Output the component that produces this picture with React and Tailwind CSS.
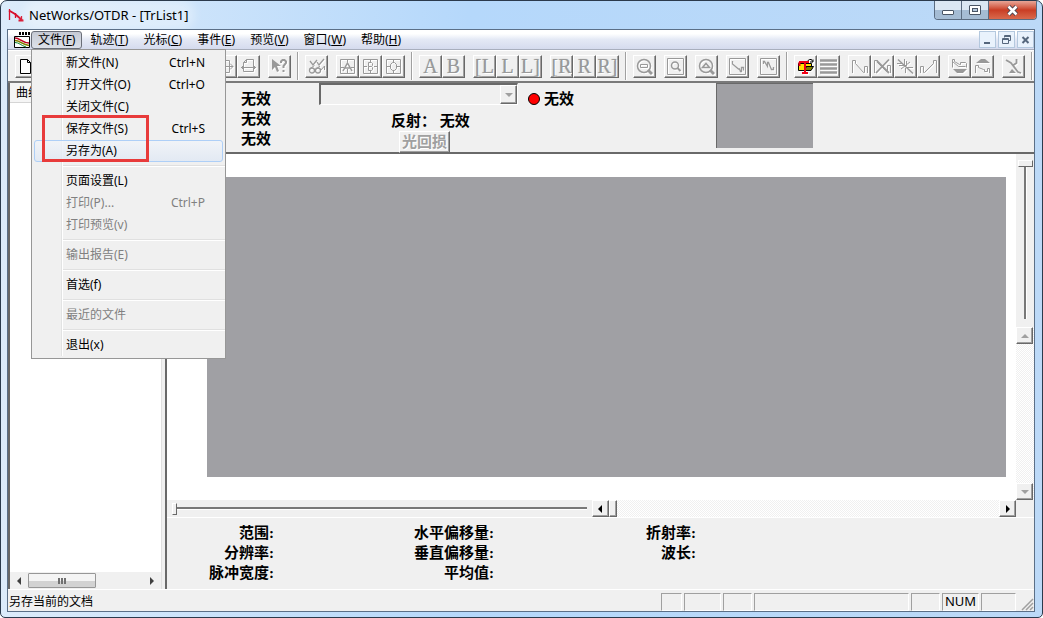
import { useState } from "react";
import clsx from "clsx";

const MENUS = [
  ["文件", "F"],
  ["轨迹", "T"],
  ["光标", "C"],
  ["事件", "E"],
  ["预览", "V"],
  ["窗口", "W"],
  ["帮助", "H"],
];

const FILE_MENU = [
  { label: "新文件(N)", keys: "Ctrl+N" },
  { label: "打开文件(O)", keys: "Ctrl+O" },
  { label: "关闭文件(C)" },
  { label: "保存文件(S)", keys: "Ctrl+S" },
  { label: "另存为(A)", active: true },
  null,
  { label: "页面设置(L)" },
  { label: "打印(P)...", keys: "Ctrl+P", disabled: true },
  { label: "打印预览(v)", disabled: true },
  null,
  { label: "输出报告(E)", disabled: true },
  null,
  { label: "首选(f)" },
  null,
  { label: "最近的文件", disabled: true },
  null,
  { label: "退出(x)" },
];

// Icon drawings on a 17x17 grid, stroked with the current color.
const ICONS = {
  new: <path d="M2.5 1.5h7l3 3v11h-10zM9.5 1.5v3h3" fill="#fff" stroke="#000" />,
  open: <path d="M1.5 14.5v-11h5l1 2h6v9zM1.5 14.5l3-6h11l-2 6" />,
  save: <path d="M2.5 2.5h12v12h-12zM5.5 2.5v5h6v-5M5.5 14.5v-4h6v4" />,
  print: <path d="M4.5 7V2.5h8V7M1.5 7.5h14v6h-14zM4.5 11.5h8" />,
  preview: <path d="M3.5 1.5h8v13h-8zM9.5 9.5l5 5" />,
  page: <path d="M4.5 2.5h8v12h-8zM1 8.5h15M13 5.5l3 3l-3 3" />,
  fit: <path d="M3.5 13.500v-9l3-3h7v12zM3.5 4.500h3v-3M1 9.500h15M4 7L1.500 9.500L4 12M13 7l2.500 2.500L13 12" />,
  help: (
    <>
      <path d="M1 1v11l3-3l2 5l2-1l-2-5h4z" fill="currentColor" stroke="none" />
      <path d="M10 5V3.5L11.5 2h2L15 3.5V5l-2.500 3v2M12.500 12v2" strokeWidth="2" />
    </>
  ),
  check: (
    <>
      <path d="M2 3l3 4l4-5M9 4l2 3l5-6" strokeWidth="1.300" />
      <circle cx="4" cy="12.500" r="2.500" strokeWidth="1.300" />
      <circle cx="10" cy="12.500" r="2.500" strokeWidth="1.300" />
      <path d="M1.500 11l5-3.500M8 11l4-3M12.500 12.500l4-4.500v4" />
    </>
  ),
  cursorA: (
    <>
      <path d="M1.500 1.500h14v14h-14zM8.500 1v3M8.500 11v5M1 9.500h4M12 9.500h4" />
      <path d="M4 13l4.500-8l4.500 8M6 10h5" strokeWidth="1.500" />
    </>
  ),
  cursorB: <path d="M1.500 1.500h14v14h-14zM8.500 1v3M8.500 13v3M1 8.500h4M12 8.500h4M6.500 4.500h3l1 1v2l-1 1h-3zM6.500 8.500v4h3l1-1v-2l-1-1" />,
  cursorO: <path d="M1.500 1.500h14v14h-14zM8.500 1v3M8.500 13v3M1 8.500h4M12 8.500h4M7.500 4.500h2l2 2v4l-2 2h-2l-2-2v-4z" />,
  zoomOut: (
    <>
      <circle cx="8" cy="8" r="6.500" strokeWidth="1.500" />
      <path d="M4.500 6.500h7v3h-7z" />
      <path d="M12 12l4 4" strokeWidth="3" />
    </>
  ),
  zoomBox: (
    <>
      <path d="M.5.500h16v16H.5z" />
      <circle cx="8" cy="7.500" r="3.500" strokeWidth="1.500" />
      <path d="M10.500 10l3 3" strokeWidth="2" />
    </>
  ),
  zoomUp: (
    <>
      <circle cx="8" cy="8" r="6.500" strokeWidth="1.500" />
      <path d="M4.500 9.500L8 5.500l3.500 4z" strokeWidth="1.500" />
      <path d="M12 12l4 4" strokeWidth="3" />
    </>
  ),
  traceFull: (
    <>
      <path d="M.5.500h16v16H.5z" />
      <path d="M3.500 3v3l6 5h1l1 2.500h1V9.500h2v3" strokeWidth="1.300" />
    </>
  ),
  traceZoom: (
    <>
      <path d="M.5.500h16v16H.5z" />
      <path d="M3.500 6V3.500h1l3 5v-4h1l3 7h2V9" strokeWidth="1.300" />
    </>
  ),
  gift: (
    <>
      <path d="M1.500 5.500h7v7h-7z" fill="#ffe100" stroke="#000" />
      <path d="M8.500 5.500h6v3h-6z" fill="#ffe100" stroke="#000" />
      <path d="M7.500 12.500l2-4h7l-2.500 4z" fill="#808000" stroke="#000" />
      <path d="M10.500 3l2-1.500h2l1 2M16 1.500v2.500h-3" stroke="#000" />
      <path d="M2 4h10M8 4v11M5 15h6M2.500 4v4" stroke="#f00016" strokeWidth="2" />
    </>
  ),
  list: <path d="M0 2.500h17M0 6.500h17M0 10.500h17M0 14.500h17" strokeWidth="2.500" />,
  trace: <path d="M1.500 15V2.500h3v3l8 9h1v-6h3V15" />,
  traceX: (
    <>
      <path d="M.5 15V2.500h3v2l9 9h1v-6h3V15" />
      <path d="M2 15L15 1.500M3 3l12 12" strokeWidth="1.800" />
    </>
  ),
  traceStar: (
    <>
      <path d="M1 1.500l15 14" strokeWidth="1.500" />
      <path d="M0 5.500h6M2 7.500h8M7.500 1v6M9.500 8V3M10 9.500h6M8.500 10v5M4 11l9-7" />
    </>
  ),
  traceUp: <path d="M.5 15V8.500h3v6h1l9-9v-3h3V15" />,
  traceDown: (
    <>
      <path d="M1.500 9.500v-8h2v2l5 3h1v-2h5l1 1v4M1.500 3.500l6 5h7" />
      <path d="M2 11h14l-4 4H6z" fill="currentColor" stroke="none" />
    </>
  ),
  traceTop: (
    <>
      <path d="M2 5l5-4h4l5 4z" fill="currentColor" stroke="none" />
      <path d="M1.500 15V7.500h3v2l5 2h1v2h3v-3h2V15" />
    </>
  ),
  split: (
    <>
      <path d="M1 2l5 3l7 9l3 1M8.500 7l3-2V1" strokeWidth="1.800" />
      <path d="M4 15l3-4l4 4z" fill="currentColor" stroke="none" />
    </>
  ),
};

// Each inner array is a run of joined buttons, "|" is a divider between runs.
// Names starting with ":" are letter buttons.
const TOOLBAR = [
  ["new", "open", "save"],
  "|",
  ["print", "preview"],
  ["page"],
  ["page"],
  ["page", "fit"],
  ["help"],
  "|",
  ["check"],
  ["cursorA", "cursorB", "cursorO"],
  "|",
  [":A", ":B"],
  [":[L", ":L", ":L]"],
  [":[R", ":R", ":R]"],
  "|",
  ["zoomOut"],
  ["zoomBox"],
  ["zoomUp"],
  ["traceFull"],
  ["traceZoom"],
  "|",
  ["gift", "list"],
  ["trace", "traceX", "traceStar", "traceUp"],
  ["traceDown", "traceTop"],
  ["split"],
  "|",
];

const RAISED =
  "border border-t-white border-l-white border-r-[#696969] border-b-[#696969] shadow-[inset_-1px_-1px_0_#a0a0a0] bg-[#f0f0f0]";
const DITHER = "bg-[repeating-conic-gradient(#ffffff_0_25%,#f0f0f0_0_50%)] bg-[length:2px_2px]";
const BOLD = "font-['Liberation_Serif','Noto_Sans_CJK_SC',serif] text-[15px] leading-5 font-bold";

function Arrow({ dir, className }) {
  const d = {
    left: "M6 0v8L2 4z",
    right: "M2 0v8l4-4z",
    up: "M0 6h8L4 2z",
    down: "M0 2h8L4 6z",
  }[dir];
  return (
    <svg viewBox="0 0 8 8" className={clsx("size-2", className)} fill="currentColor">
      <path d={d} />
    </svg>
  );
}

function ArrowButton({ dir, label, disabled }) {
  return (
    <button
      aria-label={label}
      disabled={disabled}
      className={clsx("flex size-[17px] shrink-0 items-center justify-center", RAISED, disabled ? "text-[#a0a0a0]" : "text-black")}
    >
      <Arrow dir={dir} />
    </button>
  );
}

function ToolButton({ name }) {
  const letter = name.startsWith(":");
  return (
    <button
      aria-label={letter ? undefined : name}
      className={clsx("flex size-[23px] items-center justify-center overflow-hidden text-[#999999]", RAISED)}
    >
      {letter ? (
        <span className="font-['Liberation_Serif',serif] text-[20px] leading-5 [text-shadow:1px_1px_0_#fff,0_0_1px_#999]">
          {name.slice(1)}
        </span>
      ) : (
        <svg viewBox="0 0 17 17" className="size-[17px] drop-shadow-[1px_1px_0_#fff]" fill="none" stroke="currentColor">
          {ICONS[name]}
        </svg>
      )}
    </button>
  );
}

function TitleBar() {
  return (
    <header className="flex h-[28px] items-start justify-between">
      <div className="flex h-full items-center gap-[5px]">
        <svg viewBox="0 0 16 14" className="ml-px h-[14px] w-4" fill="none" stroke="#d8102c">
          <path d="M1.500 1v11M7.500 5v5M13.500 8v5" strokeWidth="1.300" />
          <path d="M1 2.500l6 3.500l7 6M10.500 12.500h5" strokeWidth="2" />
        </svg>
        <h1 className="rounded-full bg-white/30 text-[13px] leading-5 shadow-[0_0_8px_6px_rgba(255,255,255,0.3)]">
          NetWorks/OTDR - [TrList1]
        </h1>
      </div>
      <div className="-mr-[2px] flex h-[19px] overflow-hidden rounded-b-[4px] border border-t-0 border-[#5a6b80]">
        <button aria-label="最小化" className="flex w-[27px] items-center justify-center border-r border-[#5a6b80] bg-linear-to-b from-[#dbe7f3] from-50% to-[#a5bcd4] to-50%">
          <span className="mt-1 h-[5px] w-3 rounded-[1px] border border-[#4a5565] bg-white" />
        </button>
        <button aria-label="最大化" className="flex w-[27px] items-center justify-center border-r border-[#5a6b80] bg-linear-to-b from-[#dbe7f3] from-50% to-[#a5bcd4] to-50%">
          <span className="flex h-[10px] w-3 items-center justify-center rounded-[1px] border border-[#4a5565] bg-white">
            <span className="h-1 w-[6px] border border-[#4a5565] bg-[#b5c8dc]" />
          </span>
        </button>
        <button aria-label="关闭" className="flex w-[47px] items-center justify-center bg-linear-to-b from-[#e6a597] from-0% via-[#c93d24] via-50% to-[#d9694c]">
          <svg viewBox="0 0 13 11" className="h-[11px] w-[13px]">
            <path d="M2.500 1.500l8 8M10.500 1.500l-8 8" stroke="#4d4650" strokeWidth="4.500" />
            <path d="M2.500 1.500l8 8M10.500 1.500l-8 8" stroke="#fff" strokeWidth="2.500" />
          </svg>
        </button>
      </div>
    </header>
  );
}

function FileMenu() {
  return (
    <div
      role="menu"
      className="absolute top-[18px] left-0 z-20 w-[195px] border border-[#979797] bg-[#f0f0f0] py-[2px]"
    >
      <div className="absolute inset-y-[2px] left-[29px] w-[2px] border-r border-white bg-[#e2e3e3]" />
      {FILE_MENU.map((item, i) =>
        item === null ? (
          <div key={i} role="separator" className="flex h-2 items-center pl-[30px]">
            <span className="h-[2px] w-full border-b border-white bg-[#e0e0e0]" />
          </div>
        ) : (
          <button
            key={i}
            role="menuitem"
            disabled={item.disabled}
            className={clsx(
              "relative mx-[2px] flex h-[22px] w-[189px] items-center justify-between rounded-[3px] border pr-[17px] pl-[31px] text-left",
              item.active ? "border-[#aecff7] bg-linear-to-b from-[#f1f4f9]/80 to-[#dfe8f4]/80" : "border-transparent",
              item.disabled ? "text-[#808080]" : "text-black"
            )}
          >
            <span>{item.label}</span>
            {item.keys && <span>{item.keys}</span>}
          </button>
        )
      )}
      {/* callout around the save entries */}
      <div className="pointer-events-none absolute top-[65px] left-[10px] h-[47px] w-[107px] border-3 border-[#e83b3b]" />
    </div>
  );
}

function MenuBar({ open, onToggle }) {
  return (
    <nav className="flex h-[20px] items-center gap-px border-b border-[#a8aebd] bg-linear-to-b from-white from-20% via-[#e4e9f5] to-[#d5dbee]">
      <svg viewBox="0 0 17 16" className="ml-[5px] h-4 w-[17px] shrink-0" fill="none">
        <path d="M6 1.500h11" stroke="#000" strokeWidth="3" strokeDasharray="2 1" />
        <path d="M1.500 4.500h15v11h-15z" fill="#fff" stroke="#000" />
        <path d="M2 6c5 0 7 5 14 5" stroke="#c00020" strokeWidth="1.500" />
        <path d="M2 8.500c5 0 7 4 14 5" stroke="#808000" strokeWidth="1.500" />
        <path d="M2 10.500c4 0 6 3 11 4.500" stroke="#0a8030" />
      </svg>
      {MENUS.map(([label, key], i) => (
        <div key={key} className="relative">
          <button
            onClick={i === 0 ? onToggle : undefined}
            className={clsx(
              "flex h-[18px] items-center rounded-[3px] border px-[6px]",
              i === 0 && open ? "border-[#6a6e78] bg-linear-to-b from-[#c6cad4] to-[#dde1ea]" : "border-transparent"
            )}
          >
            {label}(<u>{key}</u>)
          </button>
          {i === 0 && open && <FileMenu />}
        </div>
      ))}
      <div className="ml-auto flex gap-[2px] text-[#56677d]">
        {["M5 12h6", "M6.500 6.500v-2h6v5h-2M4.500 7.500h6v5h-6zM4 8.500h7M6 5.500h7", "M5.500 6l6 6M11.500 6l-6 6"].map((d, i) => (
          <button key={d} aria-label={["最小化文档", "还原文档", "关闭文档"][i]} className="size-[17px] border border-[#b4c8de] bg-[#e9f2fc]">
            <svg viewBox="1 1 15 15" className="size-[15px]" fill="none" stroke="currentColor" strokeWidth={i === 1 ? 1 : 2}>
              <path d={d} />
            </svg>
          </button>
        ))}
      </div>
    </nav>
  );
}

function ToolBar() {
  return (
    <div className="flex h-[31px] items-center border-t border-white pl-[7px]">
      {TOOLBAR.map((group, i) =>
        group === "|" ? (
          <div key={i} className="mx-[6px] h-[28px] w-[2px] shrink-0 border-r border-white bg-[#a0a0a0]" />
        ) : (
          <div key={i} className={clsx("flex shrink-0", Array.isArray(TOOLBAR[i - 1]) && "ml-2")}>
            {group.map((name, j) => (
              <ToolButton key={j} name={name} />
            ))}
          </div>
        )
      )}
    </div>
  );
}

function TraceList() {
  return (
    <aside className="flex w-[153px] shrink-0 flex-col border-l-2 border-[#696969] bg-white">
      <div className="h-[20px] border-r border-b border-[#d5d5d5] bg-[#f5f5f5] pl-[6px] leading-5">曲线</div>
      <div className="flex-1" />
      <div className="flex h-[17px] items-center bg-[#f0f0f0] text-[#404040]">
        <button aria-label="向左滚动" className="flex w-[18px] justify-center">
          <Arrow dir="left" />
        </button>
        <div className="flex h-[15px] w-[68px] items-center justify-center gap-px rounded-[1px] border border-[#979797] bg-linear-to-b from-[#f4f4f4] from-50% to-[#d2d2d2] to-50%">
          <span className="h-[6px] w-[2px] bg-[#707070]" />
          <span className="h-[6px] w-[2px] bg-[#707070]" />
          <span className="h-[6px] w-[2px] bg-[#707070]" />
        </div>
        <button aria-label="向右滚动" className="ml-auto flex w-[18px] justify-center">
          <Arrow dir="right" />
        </button>
      </div>
    </aside>
  );
}

function Readout() {
  return (
    <section className={clsx("flex h-[71px] items-start border-b-2 border-[#696969]", BOLD)}>
      <div className="w-[152px] shrink-0 pt-[6px] pl-[74px]">
        <p>无效</p>
        <p>无效</p>
        <p>无效</p>
      </div>
      <div className="w-[199px] shrink-0">
        <div className="relative">
          <select
            aria-label="事件"
            disabled
            className="block h-[22px] w-full appearance-none border-t-2 border-r border-b border-l-2 border-t-[#696969] border-r-white border-b-white border-l-[#696969] bg-[#f0f0f0]"
          />
          <span className={clsx("pointer-events-none absolute top-[2px] right-px flex h-[19px] w-[17px] items-center justify-center text-[#a0a0a0]", RAISED)}>
            <Arrow dir="down" />
          </span>
        </div>
        <div className="flex flex-col items-start pt-[6px] pl-[72px]">
          <p>反射： 无效</p>
          <button disabled className={clsx("ml-2 h-[22px] w-[51px] text-[#a0a0a0] [text-shadow:1px_1px_0_#fff]", RAISED)}>
            光回损
          </button>
        </div>
      </div>
      <p className="ml-[10px] flex items-center gap-1 pt-[6px]">
        <span className="size-3 rounded-full border border-black bg-[#ff0000]" />
        无效
      </p>
      <div className="ml-[142px] h-[65px] w-[97px] border-t border-l border-[#696969] bg-[#a0a0a4]" />
    </section>
  );
}

const H_RANGE =
  "h-[12px] w-full appearance-none bg-transparent [&::-webkit-slider-runnable-track]:h-[3px] [&::-webkit-slider-runnable-track]:border-b [&::-webkit-slider-runnable-track]:border-white [&::-webkit-slider-runnable-track]:bg-[#787878] [&::-webkit-slider-thumb]:-mt-[4px] [&::-webkit-slider-thumb]:h-[12px] [&::-webkit-slider-thumb]:w-[5px] [&::-webkit-slider-thumb]:appearance-none [&::-webkit-slider-thumb]:border [&::-webkit-slider-thumb]:border-t-white [&::-webkit-slider-thumb]:border-l-white [&::-webkit-slider-thumb]:border-r-[#696969] [&::-webkit-slider-thumb]:border-b-[#696969] [&::-webkit-slider-thumb]:bg-[#f0f0f0]";
const V_RANGE =
  "h-full w-[16px] appearance-none bg-transparent [writing-mode:vertical-lr] [&::-webkit-slider-runnable-track]:w-[3px] [&::-webkit-slider-runnable-track]:border-r [&::-webkit-slider-runnable-track]:border-white [&::-webkit-slider-runnable-track]:bg-[#787878] [&::-webkit-slider-thumb]:-ml-[6px] [&::-webkit-slider-thumb]:h-[7px] [&::-webkit-slider-thumb]:w-[15px] [&::-webkit-slider-thumb]:appearance-none [&::-webkit-slider-thumb]:border [&::-webkit-slider-thumb]:border-t-white [&::-webkit-slider-thumb]:border-l-white [&::-webkit-slider-thumb]:border-r-[#696969] [&::-webkit-slider-thumb]:border-b-[#696969] [&::-webkit-slider-thumb]:bg-[#f0f0f0]";

function TraceView() {
  return (
    <section className="flex min-h-0 flex-1 flex-col">
      <div className="flex min-h-0 flex-1">
        <div className="flex flex-1 bg-white pt-[23px] pr-[10px] pb-[23px] pl-10">
          <div className="flex-1 bg-[#a0a0a4]" />
        </div>
        <div className="flex w-[18px] flex-col">
          <div className="flex min-h-0 basis-1/2 justify-center pt-[6px] pb-2">
            <input type="range" aria-label="垂直缩放" defaultValue={0} className={V_RANGE} />
          </div>
          <div className={clsx("flex basis-1/2 flex-col justify-between", DITHER)}>
            <ArrowButton dir="up" label="向上滚动" disabled />
            <ArrowButton dir="down" label="向下滚动" disabled />
          </div>
        </div>
      </div>
      <div className="flex h-[18px] border-b border-white pr-[18px]">
        <div className="flex basis-1/2 items-start pt-[2px] pr-[5px] pl-[5px]">
          <input type="range" aria-label="水平缩放" defaultValue={0} className={H_RANGE} />
        </div>
        <div className={clsx("flex basis-1/2", DITHER)}>
          <ArrowButton dir="left" label="向左滚动轨迹" />
          <span className={clsx("h-[17px] w-2", RAISED)} />
          <span className="flex-1" />
          <ArrowButton dir="right" label="向右滚动轨迹" />
        </div>
      </div>
    </section>
  );
}

function Parameters() {
  return (
    <section className={clsx("grid h-[71px] grid-cols-[107px_220px_202px] content-start pt-[5px] text-right", BOLD)}>
      <p>范围:</p>
      <p>水平偏移量:</p>
      <p>折射率:</p>
      <p>分辨率:</p>
      <p>垂直偏移量:</p>
      <p>波长:</p>
      <p>脉冲宽度:</p>
      <p>平均值:</p>
    </section>
  );
}

function StatusBar() {
  const pane = "h-[18px] border border-t-[#a0a0a0] border-l-[#a0a0a0] border-r-white border-b-white";
  return (
    <footer className="flex h-[22px] items-end gap-[2px] border-t border-white">
      <p className="flex-1 pl-px leading-[18px]">另存当前的文档</p>
      <span className={clsx("w-[21px]", pane)} />
      <span className={clsx("w-[37px]", pane)} />
      <span className={clsx("w-[29px]", pane)} />
      <span className={clsx("w-[155px]", pane)} />
      <span className={clsx("w-[29px]", pane)} />
      <span className={clsx("flex w-[37px] items-center justify-center text-[13px]", pane)}>NUM</span>
      <span className={clsx("w-[35px]", pane)} />
      <svg viewBox="0 0 16 18" className="h-[18px] w-4" stroke="#a0a0a0" strokeWidth="1.500">
        <path d="M4 17L15 6M8 17l7-7M12 17l3-3" />
      </svg>
    </footer>
  );
}

export default function App() {
  const [open, setOpen] = useState(true);

  return (
    <div className="flex h-screen flex-col overflow-hidden rounded-t-[7px] rounded-b-[5px] border border-[#2b3a4c] bg-linear-to-r from-[#dcebfa] via-[#b5d8fb] via-45% to-[#bcd9f7] pr-[7px] pb-[5px] pl-[6px] font-['Noto_Sans','Noto_Sans_CJK_SC',sans-serif] text-[12px] text-black">
      <TitleBar />
      <div className="flex min-h-0 flex-1 flex-col border border-[#5b6f87] bg-[#f0f0f0]">
        <MenuBar open={open} onToggle={() => setOpen(!open)} />
        <ToolBar />
        <div className="flex min-h-0 flex-1 border-t-2 border-[#7a7a7a]">
          <TraceList />
          <div className="w-1 shrink-0 border-l border-[#e0e0e0]" />
          <main className="flex min-w-0 flex-1 flex-col border-l-2 border-[#696969]">
            <Readout />
            <TraceView />
            <Parameters />
          </main>
        </div>
        <StatusBar />
      </div>
    </div>
  );
}
